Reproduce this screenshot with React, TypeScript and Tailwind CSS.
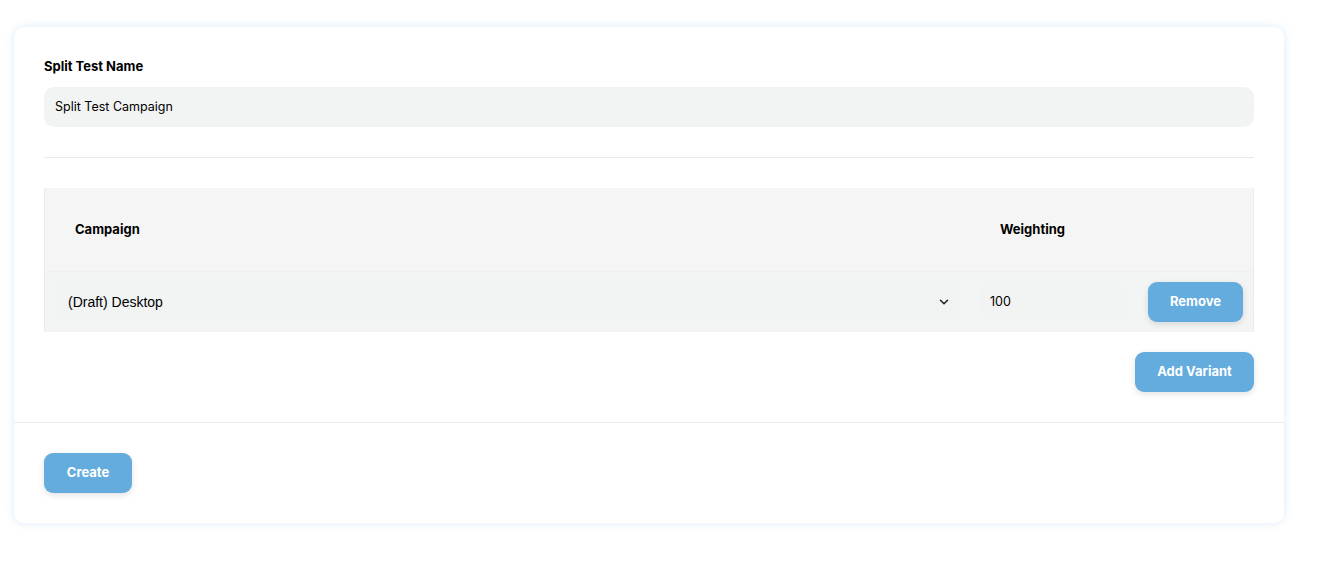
import { ChevronDown } from "lucide-react";

const font = { fontFamily: "Inter, 'Open Sans', sans-serif" };

function BlueButton({ children, className = "" }: { children: string; className?: string }) {
  return (
    <button
      className={`h-10 rounded-[9px] bg-[#64acde] text-[13px] font-bold text-white shadow-[0_2px_6px_rgba(0,0,0,0.12)] ${className}`}
    >
      {children}
    </button>
  );
}

export default function App() {
  return (
    <div className="min-h-[570px] bg-white pl-[14px] pt-[27px]" style={font}>
      <div className="w-[1270px] rounded-[10px] bg-white shadow-[0_0_8px_rgba(120,180,230,0.28)]">
        <div className="px-[30px] pt-[31px] pb-[30px]">
          <p className="text-[13px] font-bold leading-4 text-black">Split Test Name</p>
          <div className="mt-[13px] flex h-10 items-center rounded-[10px] bg-[#f2f3f3] px-[11px] text-[12.5px] text-black">
            Split Test Campaign
          </div>
          <div className="my-[30px] h-px bg-[#e9e9e9]" />

          <div className="border-x border-[#ececec]">
            <div className="grid h-[83px] grid-cols-[925px_1fr] items-center bg-[#f5f5f5] text-[13px] font-bold text-black">
              <span className="pl-[30px]">Campaign</span>
              <span className="pl-[30px]">Weighting</span>
            </div>
            <div className="grid h-[61px] grid-cols-[925px_1fr] items-center border-t border-[#f0f0f0] bg-[#f3f4f4]">
              <div className="pl-[10px] pr-[8px]">
                <div
                  className="flex h-[38px] items-center justify-between rounded-[8px] bg-[#f2f3f3] pl-[13px] pr-[11px] text-[14px] text-black"
                  style={{ fontFamily: "'Liberation Sans', Arial, sans-serif" }}
                >
                  <span>(Draft) Desktop</span>
                  <ChevronDown size={14} strokeWidth={2.6} className="text-[#222]" />
                </div>
              </div>
              <div className="flex items-center justify-between pl-[10px] pr-[10px]">
                <div className="flex h-[38px] w-[145px] items-center rounded-[8px] bg-[#f2f3f3] px-[10px] text-[12.5px] text-black">
                  100
                </div>
                <BlueButton className="w-[95px]">Remove</BlueButton>
              </div>
            </div>
          </div>

          <div className="mt-5 flex justify-end">
            <BlueButton className="w-[119px]">Add Variant</BlueButton>
          </div>
        </div>
        <div className="h-px bg-[#ececec]" />
        <div className="px-[30px] py-[30px]">
          <BlueButton className="w-[88px]">Create</BlueButton>
        </div>
      </div>
    </div>
  );
}
